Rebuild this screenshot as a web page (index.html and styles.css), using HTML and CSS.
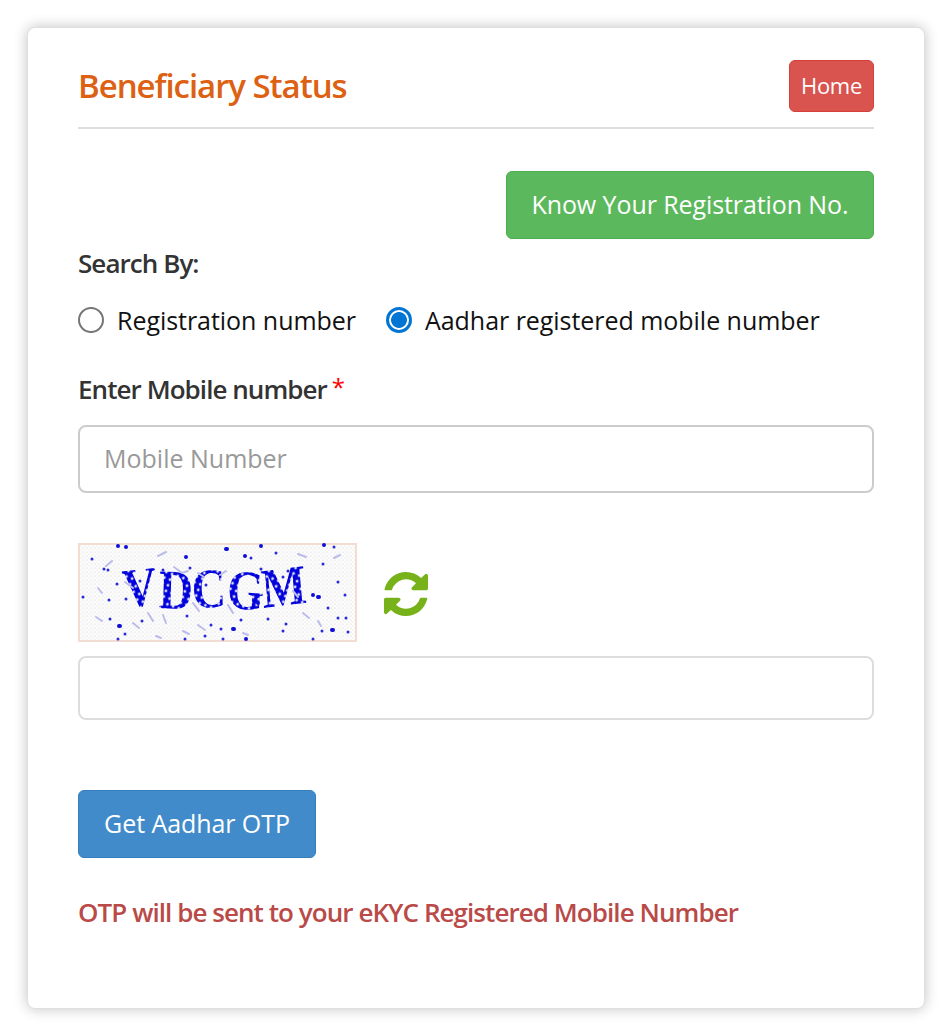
FILE: index.html
```html
<!DOCTYPE html>
<html lang="en">
<head>
<meta charset="utf-8">
<title>Beneficiary Status</title>
<link rel="stylesheet" href="styles.css">
</head>
<body>
<main class="card">
  <header class="head">
    <h1 class="title">Beneficiary Status</h1>
    <a class="btn btn-home" href="#">Home</a>
  </header>
  <div class="know-row"><a class="btn btn-know" href="#">Know Your Registration No.</a></div>
  <div class="search-label">Search By:</div>
  <div class="radios">
    <label class="radio"><span class="dot"></span>Registration number</label>
    <label class="radio"><span class="dot on"></span>Aadhar registered mobile number</label>
  </div>
  <label class="field-label">Enter Mobile number <span class="req">*</span></label>
  <input class="input input-mobile" type="text" placeholder="Mobile Number">
  <div class="captcha-row">
    <svg class="captcha" width="279" height="99" viewBox="0 0 279 99">
      <defs>
        <pattern id="speck" width="4" height="4" patternUnits="userSpaceOnUse">
          <rect width="4" height="4" fill="#fdfdfd"/>
          <circle cx="1" cy="1" r=".6" fill="#cfcfd2"/>
          <circle cx="3" cy="3" r=".6" fill="#dcdcdc"/>
        </pattern>
        <pattern id="stip" width="6" height="6" patternUnits="userSpaceOnUse" patternTransform="rotate(20)">
          <rect width="6" height="6" fill="#0404dc"/>
          <circle cx="3" cy="3" r="1.4" fill="#dcdcf6"/>
        </pattern>
        <filter id="soft"><feGaussianBlur stdDeviation=".45"/></filter>
      </defs>
      <rect x="1" y="1" width="277" height="97" fill="url(#speck)" stroke="#f3ddd2" stroke-width="2"/>
      <g filter="url(#soft)">
        <text class="captcha-text" x="46" y="65" fill="url(#stip)" rotate="-5 2 -2 3 -6" textLength="184" lengthAdjust="spacingAndGlyphs">VDCGM</text>
        <path class="noise-b" d="M96 24l8 6 6-2M34 18l-6 5M80 13l8-4M55 45l-8-6M20 45l4 5M70 70l5 8M85 72l3 8M115 60l6 8M150 62l5 8M225 70l6 5M240 78l3 5M215 48l5 6M120 30l6 4M148 28l-6 4M220 11l8 3M262 12l-6 3M18 74l6 4M165 90l5 2M120 82l7 5M55 80l6 5M105 88l6 3M78 93l5 2"/>
        <path class="noise-c" d="M14 16h0M5 54h0M26 26h0M30 27h0M31 57h0M39 41h0M48 56h0M62 38h0M32 76h0M47 91h0M40 96h0M64 78h0M85 27h0M112 25h0M128 42h0M173 15h0M183 26h0M198 10h0M205 34h0M210 28h0M245 21h0M256 4h0M260 39h0M267 52h0M250 65h0M260 75h0M268 75h0M244 88h0M270 89h0M235 96h0M205 88h0M145 96h0M127 93h0M107 96h0M109 73h0M133 82h0M143 86h0M163 77h0M190 76h0M208 81h0"/>
        <path class="noise-a" d="M40 3h0M48 4h0M167 13h0M148 6h1M183 3h0M246 2h0M240 54h1M254 87h1M168 96h0M155 86h1M41 83h1M108 14h0M235 52h0M180 60h0"/>
      </g>
    </svg>
    <svg class="refresh" width="44" height="44" viewBox="0 0 1536 1536">
      <path d="M1511 928q0 5-1 7-64 268-268 434.500t-478 166.500q-146 0-282.500-55t-243.500-157l-129 129q-19 19-45 19t-45-19-19-45v-448q0-26 19-45t45-19h448q26 0 45 19t19 45-19 45l-137 137q71 66 161 102t187 36q134 0 250-65t186-179q11-17 53-117 8-23 30-23h192q13 0 22.500 9.500t9.500 22.500zm25-800v448q0 26-19 45t-45 19h-448q-26 0-45-19t-19-45 19-45l138-138q-148-137-349-137-134 0-250 65t-186 179q-11 17-53 117-8 23-30 23h-199q-13 0-22.500-9.500t-9.500-22.500v-7q65-268 270-434.500t480-166.500q146 0 284 55.500t245 156.500l130-129q19-19 45-19t45 19 19 45z"/>
    </svg>
  </div>
  <input class="input input-captcha" type="text">
  <div class="submit-row"><a class="btn btn-otp" href="#">Get Aadhar OTP</a></div>
  <p class="note">OTP will be sent to your eKYC Registered Mobile Number</p>
</main>
</body>
</html>
```

FILE: styles.css
```css
* { box-sizing: border-box; }
html, body { margin: 0; background: #fff; }
body {
  padding: 27px 27px 21px;
  font-family: "Open Sans", "Noto Sans", sans-serif;
  color: #333;
}
.card {
  height: 982px;
  padding: 32px 50px 0;
  background: #fff;
  border-radius: 8px;
  border: 1px solid #e0e0e0;
  box-shadow: 0 0 14px rgba(0, 0, 0, .24);
}
.head {
  display: flex;
  justify-content: space-between;
  align-items: flex-start;
  height: 69px;
  border-bottom: 2px solid #ddd;
}
.title {
  margin: 4px 0 0;
  font-size: 33px;
  line-height: 44px;
  font-weight: 600;
  letter-spacing: -1.05px;
  color: #dd6113;
}
.btn {
  display: inline-flex;
  align-items: center;
  justify-content: center;
  padding-bottom: 2px;
  color: #fff;
  text-decoration: none;
  border-radius: 6px;
  border: 1px solid;
}
.btn-home {
  width: 85px;
  height: 52px;
  font-size: 22px;
  letter-spacing: -.3px;
  background: #d9534f;
  border-color: #d43f3a;
}
.know-row { display: flex; justify-content: flex-end; margin-top: 42px; }
.btn-know {
  width: 368px;
  height: 68px;
  font-size: 25px;
  letter-spacing: -.09px;
  background: #5cb85c;
  border-color: #4cae4c;
}
.search-label {
  margin-top: 7px;
  font-size: 26px;
  line-height: 34px;
  font-weight: 600;
  letter-spacing: -.94px;
}
.radios { display: flex; gap: 30px; margin-top: 23px; }
.radio {
  display: flex;
  align-items: center;
  gap: 13px;
  font-size: 25px;
  line-height: 34px;
  letter-spacing: -.04px;
  color: #111;
}
.dot {
  width: 26px;
  height: 26px;
  border-radius: 50%;
  border: 2px solid #767676;
  background: #fff;
}
.dot.on {
  border: 3px solid #0075d4;
  background: radial-gradient(circle, #0075d4 0 7.5px, #fff 8.3px);
}
.field-label {
  display: block;
  margin-top: 35px;
  font-size: 26px;
  line-height: 34px;
  font-weight: 600;
  letter-spacing: -.94px;
}
.req {
  margin-left: -1px;
  color: #f00;
  font-weight: 400;
  font-size: 24px;
  line-height: 0;
  vertical-align: 3px;
}
.input {
  display: block;
  width: 100%;
  padding: 0 24px 2px;
  font: 25px "Open Sans", sans-serif;
  color: #555;
  background: #fff;
  border: 2px solid #ccc;
  border-radius: 8px;
  outline: none;
}
.input::placeholder { color: #999; opacity: 1; }
.input-mobile { height: 68px; margin-top: 19px; }
.captcha-row { display: flex; align-items: center; gap: 27px; margin-top: 50px; }
.captcha { display: block; }
.captcha-text {
  font-family: "Liberation Serif", serif;
  font-size: 56px;
  font-weight: 700;
}
.noise-a { fill: none; stroke: #1010d8; stroke-width: 4; stroke-linecap: round; }
.noise-b { fill: none; stroke: #bcbcec; stroke-width: 2; stroke-linecap: round; }
.noise-c { fill: none; stroke: #2a2ad8; stroke-width: 3; stroke-linecap: round; }
.refresh { display: block; margin-top: 2px; fill: #77b21b; }
.input-captcha { height: 64px; margin-top: 14px; border-color: #ddd; }
.submit-row { margin-top: 70px; }
.btn-otp {
  width: 238px;
  height: 68px;
  font-size: 25px;
  letter-spacing: -.07px;
  background: #428bca;
  border-color: #357ebd;
}
.note {
  margin: 37px 0 0;
  font-size: 26px;
  line-height: 34px;
  font-weight: 600;
  letter-spacing: -.94px;
  color: #b94a48;
}
```
